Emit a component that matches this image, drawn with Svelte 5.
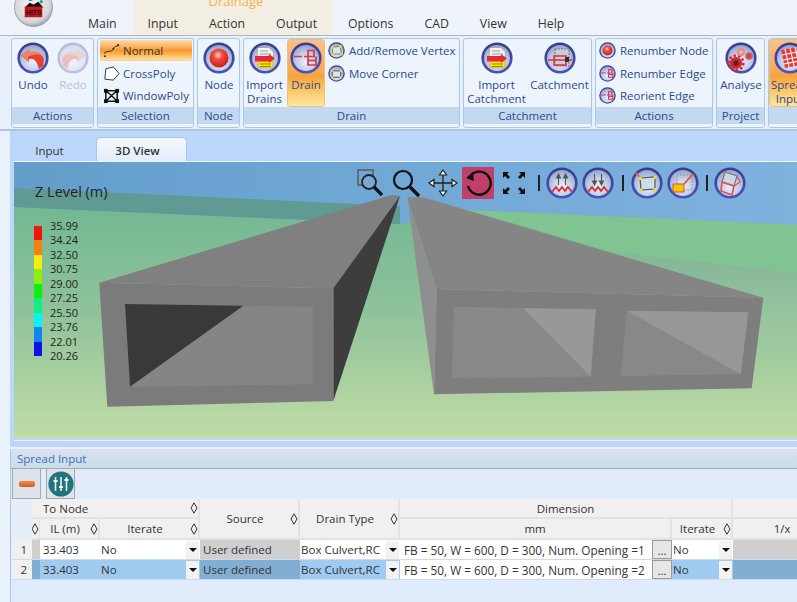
<script>
  const tabs = ['Main', 'Input', 'Action', 'Output', 'Options', 'CAD', 'View', 'Help'];
  const legend = ['35.99', '34.24', '32.50', '30.75', '29.00', '27.25', '25.50', '23.76', '22.01', '20.26'];
  const swatches = ['#f2130f', '#f08212', '#f2ee10', '#8cf010', '#10ee10', '#10ee84', '#10f2f2', '#1084f0', '#1010ee'];
  const rows = [
    { n: 1, dim: 'FB = 50, W = 600, D = 300, Num. Opening =1' },
    { n: 2, dim: 'FB = 50, W = 600, D = 300, Num. Opening =2' }
  ];
</script>

{#snippet ring(name, cls)}
  <svg class={cls} viewBox="0 0 32 32" aria-hidden="true">
    <circle cx="16" cy="16" r="15.6" fill="url(#rimG)" />
    <circle cx="16" cy="16" r="13" fill="url(#discG)" />
    {#if name === 'undo'}
      <path d="M4 13.5 L12 7.5 L13 10 C19 8 25 11 27 17 L26 24 L22 27 L20 21 C18 17 15 16 12 17 L11.5 20 Z" fill="#e8402f" />
      <path d="M4 13.5 L12 7.5 L13 10 C18 8.5 23 10 25.5 14 C21 12 16 12 11 15 L11.5 20 Z" fill="#f0806a" />
    {:else if name === 'node'}
      <circle cx="16" cy="16" r="9.5" fill="url(#ballG)" />
    {:else if name === 'import'}
      <path d="M9 6 H20 L24 10 V26 H9 Z" fill="#f4e415" stroke="#a89a20" stroke-width=".5" />
      <path d="M9 6 H20 L24 10 V14 H9 Z" fill="#f2f2ee" />
      <path d="M11 9 H19 M11 12 H22" stroke="#999" stroke-width="1" />
      <path d="M11 22 H22 M11 24.5 H22" stroke="#8a7c10" stroke-width=".9" />
      <path d="M6 14 H20 V12 L26 16.5 L20 21 V19.5 H6 Z" fill="#e8283a" />
    {:else if name === 'drain'}
      <path d="M4 14.5 H12 M14 14.5 H24 V8.5 H18 V23 H26 V14.5" fill="none" stroke="#e1343c" stroke-width="1.7" />
      <path d="M18 18.5 H26" stroke="#e1343c" stroke-width="1.7" />
    {:else if name === 'vertex'}
      <path d="M8 10 L23 8 L25 22 L9 23 Z" fill="#dbe4f2" stroke="#4a6a2a" stroke-width="1.4" />
      <g fill="#e8dc30"><rect x="6" y="8" width="5" height="5" /><rect x="21" y="6" width="5" height="5" /><rect x="23" y="20" width="5" height="5" /><rect x="7" y="21" width="5" height="5" /></g>
    {:else if name === 'corner'}
      <path d="M8 11 H24 V23 H8 Z" fill="#dbe4f2" stroke="#333" stroke-width="1.6" />
      <path d="M3 5 L9 11" stroke="#e86a5a" stroke-width="1.6" />
      <g fill="#e8dc30"><rect x="6" y="9" width="4" height="4" /><rect x="22" y="9" width="4" height="4" /><rect x="22" y="21" width="4" height="4" /><rect x="6" y="21" width="4" height="4" /></g>
    {:else if name === 'catch'}
      <rect x="11" y="7" width="14" height="17" fill="#c8cfdb" stroke="#777" stroke-width="1" stroke-dasharray="2 1" />
      <rect x="10" y="14" width="12" height="9" fill="none" stroke="#e1343c" stroke-width="1.6" />
      <path d="M4 18 H28" stroke="#e1343c" stroke-width="1.6" />
      <rect x="21" y="15" width="4" height="5" fill="#333" />
    {:else if name === 'edge'}
      <path d="M4 15 H13 M15 15 H24 V9 H18 V23 H26 V15 M18 18 H26" fill="none" stroke="#d63a52" stroke-width="2" />
    {:else if name === 'gears'}
      <circle cx="11" cy="21" r="4.4" fill="#333" stroke="#e1202a" stroke-width="3.4" />
      <circle cx="11" cy="21" r="7.4" fill="none" stroke="#e1202a" stroke-width="2.4" stroke-dasharray="2.4 2.2" />
      <circle cx="16" cy="10" r="3" fill="none" stroke="#e89080" stroke-width="2.6" />
      <circle cx="24" cy="14" r="2.6" fill="#666" stroke="#e25050" stroke-width="2.4" />
    {:else if name === 'sheet'}
      <path d="M7 8 L22 5 L26 23 L11 26 Z" fill="#e83a3a" />
      <path d="M11 7 L15 25 M16 6 L20 24 M21 5 L25 23 M8 13 L23 10 M9 18 L24 15 M10 22 L25 19" stroke="#fff" stroke-width="1.1" />
    {:else if name === 'up' || name === 'down'}
      <path d="M6 25 L10 20 L13 24 L16 20 L19 24 L22 20 L26 25" fill="none" stroke="#e0303a" stroke-width="1.8" />
      {#if name === 'up'}
        <path d="M12.5 18 V8 M19.5 18 V8 M10.5 11 L12.5 7 L14.5 11 Z M17.5 11 L19.5 7 L21.5 11 Z" stroke="#555" stroke-width="1.1" fill="#555" />
      {:else}
        <path d="M12.5 7 V17 M19.5 7 V17 M10.5 14 L12.5 18 L14.5 14 Z M17.5 14 L19.5 18 L21.5 14 Z" stroke="#555" stroke-width="1.1" fill="#555" />
      {/if}
    {:else if name === 'fit'}
      <path d="M9 11 L24 10 L24 22 L10 23 Z" fill="#cfdaec" stroke="#555" stroke-width="1.2" />
      <path d="M4 5 L10 11" stroke="#e86a5a" stroke-width="1.5" />
      <g fill="#e8dc30"><rect x="8" y="10" width="3" height="3" /><rect x="22.5" y="9" width="3" height="3" /><rect x="22.5" y="21" width="3" height="3" /><rect x="8.5" y="21.5" width="3" height="3" /></g>
    {:else if name === 'box'}
      <rect x="10" y="8" width="15" height="15" fill="none" stroke="#999" stroke-dasharray="2 1" />
      <rect x="6" y="17" width="11" height="8" fill="#f6c408" stroke="#d0392a" stroke-width=".8" />
      <path d="M17 17 L26 7" stroke="#e8503a" stroke-width="1.8" />
    {:else if name === 'cube'}
      <path d="M11 5 L23 9 L20 19 L8 15 Z" fill="#cfd6e6" stroke="#777" stroke-width="1.2" />
      <path d="M8 15 L20 19 L18 28 L7 24 Z" fill="none" stroke="#d8505a" stroke-width="1.6" />
      <path d="M20 19 L26 15 L23 9" fill="none" stroke="#d8505a" stroke-width="1.2" />
    {/if}
  </svg>
{/snippet}

{#snippet diamond()}
  <svg class="dia" viewBox="0 0 8 12" aria-hidden="true"><path d="M4 .8 L7 6 L4 11.2 L1 6 Z" fill="none" stroke="#333" stroke-width="1" /></svg>
{/snippet}

{#snippet drop()}
  <span class="drop"><svg viewBox="0 0 8 4" aria-hidden="true"><path d="M0 0 H8 L4 4 Z" fill="#111" /></svg></span>
{/snippet}

<svg class="defs" aria-hidden="true">
  <defs>
    <linearGradient id="rimG" x1="0" y1="0" x2="0" y2="1"><stop offset="0" stop-color="#383d8a" /><stop offset="1" stop-color="#4a52b8" /></linearGradient>
    <radialGradient id="discG" cx=".5" cy=".65" r=".65"><stop offset="0" stop-color="#e8f0fb" /><stop offset=".5" stop-color="#c6d2ec" /><stop offset="1" stop-color="#93a3cf" /></radialGradient>
    <radialGradient id="ballG" cx=".45" cy=".35" r=".7"><stop offset="0" stop-color="#ffd4c8" /><stop offset=".35" stop-color="#f04a3e" /><stop offset="1" stop-color="#c41a18" /></radialGradient>
    <radialGradient id="silverG" cx=".45" cy=".4" r=".65"><stop offset="0" stop-color="#f4f4f4" /><stop offset=".75" stop-color="#d4d6d8" /><stop offset="1" stop-color="#8b8f96" /></radialGradient>
    <linearGradient id="skyG" x1="0" y1="0" x2="1" y2="0"><stop offset="0" stop-color="#639ecb" /><stop offset=".5" stop-color="#71a8d6" /><stop offset="1" stop-color="#80b2de" /></linearGradient>
    <linearGradient id="groundG" gradientUnits="userSpaceOnUse" x1="0" y1="205" x2="0" y2="438"><stop offset="0" stop-color="#72b893" /><stop offset=".45" stop-color="#8fc29a" /><stop offset="1" stop-color="#c0dca6" /></linearGradient>
    <linearGradient id="farG" gradientUnits="userSpaceOnUse" x1="0" y1="262" x2="0" y2="340"><stop offset="0" stop-color="#86b898" /><stop offset="1" stop-color="#9dc99f" /></linearGradient>
  </defs>
</svg>

<div class="app">
  <header class="menu">
    <div class="orb">
      <svg viewBox="0 0 40 40" aria-hidden="true">
        <circle cx="20" cy="20" r="19.5" fill="url(#silverG)" stroke="#8f939a" stroke-width=".8" />
        <path d="M11 20 L16 15 L20 17 L25 14 L30 20 Z" fill="#111" />
        <circle cx="17" cy="11" r="2.4" fill="#1d7fc4" /><circle cx="23" cy="10" r="2.2" fill="#1d7fc4" /><circle cx="28" cy="14" r="1.6" fill="#29a0a0" />
        <rect x="11" y="19" width="18" height="11" fill="#c8141c" />
        <text x="20" y="28" class="orbt">HITS</text>
      </svg>
    </div>
    <div class="ctx"><span>Drainage</span></div>
    <nav class="tabs">
      {#each tabs as t}<span>{t}</span>{/each}
    </nav>
  </header>

  <section class="ribbon">
    <div class="group g-act">
      <div class="body">
        <div class="big">{@render ring('undo', 'lg')}<span>Undo</span></div>
        <div class="big off">{@render ring('undo', 'lg flip')}<span>Redo</span></div>
      </div>
      <div class="title">Actions</div>
    </div>

    <div class="group g-sel">
      <div class="body col">
        <div class="sel on">
          <svg class="si" viewBox="0 0 18 18" aria-hidden="true"><path d="M1 12 C6 8 9 12 11 7 C12 5 14 4 17 4" fill="none" stroke="#222" stroke-width="1" /><circle cx="2" cy="15" r="1" fill="#222" /><circle cx="11" cy="7" r="1" fill="#222" /><circle cx="16" cy="3" r="1" fill="#222" /></svg>
          <span>Normal</span>
        </div>
        <div class="sel">
          <svg class="si" viewBox="0 0 18 18" aria-hidden="true"><path d="M3 4 L11 2 L17 9 L11 16 L2 15 Z" fill="#fff" stroke="#333" stroke-width="1" /></svg>
          <span>CrossPoly</span>
        </div>
        <div class="sel">
          <svg class="si" viewBox="0 0 18 18" aria-hidden="true"><path d="M3 4 L15 4 L15 15 L3 15 Z M3 4 L9 9 L15 4 M3 15 L9 9 L15 15" fill="none" stroke="#111" stroke-width="1.6" /><g fill="#111"><rect x="1" y="2" width="4" height="4" /><rect x="13" y="2" width="4" height="4" /><rect x="1" y="13" width="4" height="4" /><rect x="13" y="13" width="4" height="4" /></g></svg>
          <span>WindowPoly</span>
        </div>
      </div>
      <div class="title">Selection</div>
    </div>

    <div class="group g-node">
      <div class="body"><div class="big wide">{@render ring('node', 'lg')}<span>Node</span></div></div>
      <div class="title">Node</div>
    </div>

    <div class="group g-drain">
      <div class="body">
        <div class="big b-imp">{@render ring('import', 'lg')}<span>Import<br />Drains</span></div>
        <div class="big b-drain on">{@render ring('drain', 'lg')}<span>Drain</span></div>
        <div class="small-col pad-l">
          <div class="sm">{@render ring('vertex', 'smi')}<span>Add/Remove Vertex</span></div>
          <div class="sm">{@render ring('corner', 'smi')}<span>Move Corner</span></div>
        </div>
      </div>
      <div class="title">Drain</div>
    </div>

    <div class="group g-catch">
      <div class="body">
        <div class="big b-c">{@render ring('import', 'lg')}<span>Import<br />Catchment</span></div>
        <div class="big b-c">{@render ring('catch', 'lg')}<span>Catchment</span></div>
      </div>
      <div class="title">Catchment</div>
    </div>

    <div class="group g-act2">
      <div class="body">
        <div class="small-col">
          <div class="sm">{@render ring('node', 'smi')}<span>Renumber Node</span></div>
          <div class="sm">{@render ring('edge', 'smi')}<span>Renumber Edge</span></div>
          <div class="sm">{@render ring('edge', 'smi')}<span>Reorient Edge</span></div>
        </div>
      </div>
      <div class="title">Actions</div>
    </div>

    <div class="group g-proj">
      <div class="body"><div class="big wide">{@render ring('gears', 'lg')}<span>Analyse</span></div></div>
      <div class="title">Project</div>
    </div>

    <div class="group g-spread">
      <div class="body"><div class="big b-spread on">{@render ring('sheet', 'lg')}<span>Spread<br />Input</span></div></div>
      <div class="title">&nbsp;</div>
    </div>
  </section>

  <section class="doc">
    <div class="doctabs">
      <span class="dt">Input</span>
      <span class="dt active">3D View</span>
    </div>
    <div class="canvas">
      <svg class="scene" viewBox="14 162 783 276" preserveAspectRatio="none" aria-hidden="true">
        <rect x="14" y="162" width="783" height="276" fill="url(#skyG)" />
        <path d="M14 207 L400 224 L467 210 L797 225 V438 H14 Z" fill="url(#groundG)" />
        <path d="M467 210 L797 225 V273 L613 252 Z" fill="#80c492" />
        <path d="M14 188 L400 206 V224 L14 207 Z" fill="#5f9a93" />
        <path d="M613 252 L797 273 V340 H763 L680 272 Z" fill="url(#farG)" />

        <path d="M99.3 282.7 L391.7 195 L400 196 L333.3 288.3 Z" fill="#808080" />
        <path d="M333.3 288.3 L400 196 L333.3 401 Z" fill="#3d3d3d" />
        <path d="M99.3 282.7 L333.3 288.3 V401 L107.3 406.7 Z" fill="#7b7b7b" />
        <path d="M125 304 L312.7 306.7 V384.3 L130 386.7 Z" fill="#858585" />
        <path d="M125 304 L243.3 305.7 L130 386.7 Z" fill="#393939" />

        <path d="M407.3 197.3 L436.7 289 L434 394.3 Z" fill="#8f8f8f" />
        <path d="M407.3 197.3 L423.3 197.3 L763.3 297.7 L436.7 289 Z" fill="#858585" />
        <path d="M436.7 289 L763.3 297.7 L751.7 388.3 L434 394.3 Z" fill="#7e7e7e" />
        <path d="M454 306.7 L595.7 309.3 L590.7 376.7 L451.7 378.3 Z" fill="#888888" />
        <path d="M523.3 308.3 L595.7 309.3 L590.7 376.7 Z" fill="#989898" />
        <path d="M626.7 310.7 L748.3 312.3 L740.7 374.3 L620.7 376 Z" fill="#888888" />
        <path d="M626.7 310.7 L748.3 312.3 L740.7 374.3 Z" fill="#979797" />
      </svg>

      <div class="zlabel">Z Level (m)</div>
      <div class="legend">
        <div class="bar">{#each swatches as c}<i style:background={c}></i>{/each}</div>
        <div class="vals">{#each legend as v}<span>{v}</span>{/each}</div>
      </div>

      <div class="tools">
        <svg class="ti" viewBox="0 0 32 32" aria-hidden="true"><rect x="4" y="3" width="15" height="15" fill="none" stroke="#555" stroke-width="1.4" /><circle cx="15" cy="15" r="7" fill="#7aa8d0" stroke="#222" stroke-width="1.8" /><path d="M20 20 L28 28" stroke="#111" stroke-width="3.2" /></svg>
        <svg class="ti" viewBox="0 0 32 32" aria-hidden="true"><circle cx="13" cy="13" r="9" fill="none" stroke="#111" stroke-width="2.2" /><path d="M20 20 L29 29" stroke="#111" stroke-width="3.4" /></svg>
        <svg class="ti" viewBox="0 0 32 32" aria-hidden="true"><path d="M17 5 V27 M5 16 H29" stroke="#222" stroke-width="1.3" /><path d="M17 3 L20.5 8 H13.5 Z M17 29 L20.5 24 H13.5 Z M3 16 L8 12.5 V19.5 Z M31 16 L26 12.5 V19.5 Z" fill="#fff" stroke="#222" stroke-width="1.2" /></svg>
        <div class="rot"><svg viewBox="0 0 32 32" aria-hidden="true"><path d="M9 8 A11.5 11.5 0 1 1 6 19" fill="none" stroke="#111" stroke-width="2.4" /><path d="M4 11 L12 14 L11 5 Z" fill="#111" /></svg></div>
        <svg class="ti" viewBox="0 0 32 32" aria-hidden="true"><path d="M5 5 H11 L9 7 L12 10 L10 12 L7 9 L5 11 Z M27 5 V11 L25 9 L22 12 L20 10 L23 7 L21 5 Z M5 27 V21 L7 23 L10 20 L12 22 L9 25 L11 27 Z M27 27 H21 L23 25 L20 22 L22 20 L25 23 L27 21 Z" fill="#111" /></svg>
        <span class="sep s1"></span>
        {@render ring('up', 'lg')}
        {@render ring('down', 'lg')}
        <span class="sep s2"></span>
        {@render ring('fit', 'lg')}
        {@render ring('box', 'lg')}
        <span class="sep s3"></span>
        {@render ring('cube', 'lg')}
      </div>
    </div>
  </section>

  <section class="panel">
    <div class="phead">Spread Input</div>
    <div class="ptools">
      <div class="pbtn"><span class="minus"></span></div>
      <div class="pbtn">
        <svg viewBox="0 0 26 26" aria-hidden="true"><circle cx="13" cy="13" r="12.6" fill="#1f7480" /><path d="M7.5 6 V20 M13 6 V20 M18.5 6 V20" stroke="#e8f2f4" stroke-width="1.6" /><path d="M5.5 9 H9.5 V11 H5.5 Z M11 15 H15 V17 H11 Z M16.5 8 H20.5 V10 H16.5 Z" fill="#fff" /></svg>
      </div>
    </div>
    <table>
      <colgroup>
        <col class="c20" /><col class="c8" /><col class="c60" /><col class="c100" /><col class="c100" /><col class="c100" /><col class="c272" /><col class="c61" /><col class="c100" />
      </colgroup>
      <thead>
        <tr class="h1">
          <th rowspan="2" class="blank"></th>
          <th colspan="3"><div class="hc left"><span>To Node</span>{@render diamond()}</div></th>
          <th rowspan="2"><div class="hc"><span>Source</span>{@render diamond()}</div></th>
          <th rowspan="2"><div class="hc"><span>Drain Type</span>{@render diamond()}</div></th>
          <th colspan="2">Dimension</th>
          <th></th>
        </tr>
        <tr class="h2">
          <th class="tight">{@render diamond()}</th>
          <th><div class="hc"><span>IL (m)</span>{@render diamond()}</div></th>
          <th><div class="hc"><span>Iterate</span>{@render diamond()}</div></th>
          <th>mm</th>
          <th><div class="hc"><span>Iterate</span>{@render diamond()}</div></th>
          <th>1/x</th>
        </tr>
      </thead>
      <tbody>
        {#each rows as r}
          <tr class:sel2={r.n === 2}>
            <td class="num">{r.n}</td>
            <td class="ro"></td>
            <td class="ed">33.403</td>
            <td class="ed"><div class="dd"><span>No</span>{@render drop()}</div></td>
            <td class="ro">User defined</td>
            <td class="ed"><div class="dd"><span>Box Culvert,RC</span>{@render drop()}</div></td>
            <td class="dim"><div class="dimw"><span class="dimt">{r.dim}</span><span class="more">...</span></div></td>
            <td class="ed"><div class="dd"><span>No</span>{@render drop()}</div></td>
            <td class="ro"></td>
          </tr>
        {/each}
      </tbody>
    </table>
  </section>
</div>

<style>
  :global(body) { margin: 0; background: #e9f1fb; }
  .defs { position: absolute; width: 0; height: 0; }
  .app {
    width: 797px; height: 602px; overflow: hidden;
    display: flex; flex-direction: column;
    background: #e9f1fb;
    font-family: "Open Sans", "Noto Sans", sans-serif;
    font-size: 11.5px; color: #222;
  }
  svg { display: block; flex: none; }

  .menu { height: 35px; flex: none; position: relative; background: #eff4fb; overflow: hidden; }
  .orb { position: absolute; left: 14px; top: -12px; width: 39px; height: 39px; }
  .orbt { font: bold 7px "Liberation Sans", sans-serif; fill: #111; text-anchor: middle; }
  .ctx {
    position: absolute; left: 133px; top: 0; width: 199px; height: 35px; box-sizing: border-box;
    background: #f2eee3; color: #f7b04e; font-size: 13px; line-height: 13px;
    display: flex; justify-content: center; align-items: flex-start; padding-left: 7px;
  }
  .ctx span { margin-top: -5px; }
  .tabs { position: absolute; left: 88px; top: 15px; display: flex; gap: 31px; font-size: 12.3px; color: #333; line-height: 18px; }

  .ribbon {
    height: 96px; flex: none; box-sizing: border-box;
    display: flex; gap: 3px; padding: 2px 0 0 11px;
    background: #e8f1fb; border-top: 1px solid #aeb8c4; border-bottom: 2px solid #aac5e6;
    overflow: hidden;
  }
  .group {
    flex: none; height: 90px; box-sizing: border-box;
    display: flex; flex-direction: column;
    background: #eef4fc; border: 1px solid #a9c8ef; border-radius: 3px;
    padding-bottom: 3px;
  }
  .g-act { width: 83px; } .g-sel { width: 97px; } .g-node { width: 43px; } .g-drain { width: 217px; }
  .g-catch { width: 129px; } .g-act2 { width: 118px; } .g-proj { width: 49px; } .g-spread { width: 90px; }
  .body { flex: 1; display: flex; min-height: 0; padding-left: 1px; }
  .col { flex-direction: column; }
  .title { height: 17px; flex: none; background: #c3d9ef; text-align: center; color: #2c4a8c; font-size: 11.5px; line-height: 17px; }

  .big {
    width: 40px; flex: none; display: flex; flex-direction: column; align-items: center;
    padding-top: 2px; box-sizing: border-box;
    color: #2c4a8c; text-align: center; line-height: 14px; border-radius: 3px; border: 1px solid transparent;
  }
  .big span { margin-top: 4px; white-space: nowrap; }
  .off { opacity: .3; }
  .wide { width: 100%; }
  .b-imp { width: 39px; }
  .b-drain { width: 38px; margin-left: 3px; }
  .b-c { width: 63px; }
  .b-spread { width: 42px; margin-left: -1px; }
  .on {
    background: linear-gradient(#fdd49a 0, #fbb263 30%, #f9962f 50%, #fbbd62 75%, #fde0a0 100%);
    border: 1px solid #e5c27e;
  }
  .big.on { background: linear-gradient(#fdc084 0, #fba957 45%, #f9a33c 55%, #fcd47c 85%, #fde3a3 100%); color: #2c4a8c; }
  .lg { width: 32px; height: 32px; }
  .smi { width: 17px; height: 17px; }
  .flip { transform: scaleX(-1); }

  .sel {
    height: 21px; box-sizing: border-box; display: flex; align-items: center; gap: 3px;
    margin: 1px 1px 0 1px; padding-left: 2px; color: #2c4a8c; border: 1px solid transparent; border-radius: 2px;
  }
  .sel + .sel { margin-top: 1.5px; }
  .si { width: 17px; height: 17px; }
  .sel.on { color: #333; }
  .small-col { display: flex; flex-direction: column; gap: 5.5px; padding: 3px 0 0 2px; }
  .small-col.pad-l { padding-left: 3px; }
  .sm { display: flex; align-items: center; gap: 4px; height: 17px; color: #2c4a8c; white-space: nowrap; }

  .doc { height: 316px; flex: none; margin-left: 10px; background: #bcd7f9; display: flex; flex-direction: column; }
  .doctabs { height: 30px; flex: none; display: flex; align-items: flex-end; padding-left: 5px; }
  .dt { width: 81px; height: 24px; box-sizing: border-box; text-align: center; line-height: 28px; color: #333; font-size: 11.5px; padding-right: 12px; }
  .active {
    width: 91px; font-weight: 600; color: #333; background: linear-gradient(#f4f8fd, #e2edfa);
    border: 1px solid #a9c8ef; border-bottom: 0; border-radius: 5px 5px 0 0; line-height: 26px; padding-right: 8px;
  }
  .canvas {
    height: 278px; flex: none; position: relative; margin-left: 4px; border-top: 1px solid #f2f6fb; border-bottom: 1px solid #f2f6fb; overflow: hidden;
  }
  .scene { width: 783px; height: 276px; }
  .zlabel { position: absolute; left: 21px; top: 21px; font-size: 14.5px; color: #222; line-height: 18px; }
  .legend { position: absolute; left: 20px; top: 57px; display: flex; gap: 8px; }
  .bar { width: 8px; display: flex; flex-direction: column; margin-top: 7px; }
  .bar i { display: block; height: 14.45px; }
  .vals { display: flex; flex-direction: column; font-size: 11px; line-height: 14.45px; color: #222; }

  .tools { position: absolute; left: 340px; top: 5px; display: flex; align-items: center; gap: 4px; }
  .ti { width: 32px; height: 32px; }
  .rot { width: 32px; height: 32px; background: #c1406a; }
  .rot svg { width: 32px; height: 32px; }
  .sep { width: 2px; height: 16px; background: #222; }
  .s1 { margin: 0 2px 0 4px; }
  .s2 { margin: 0 3px 0 4px; }
  .s3 { margin: 0 2px 0 3px; }

  .panel { flex: 1; min-height: 0; margin-left: 10px; margin-top: 2px; background: #e0ecfc; border-left: 1px solid #a9c8ef; overflow: hidden; }
  .phead { height: 20px; box-sizing: border-box; background: linear-gradient(#dcdff0, #c8dfe8); border-bottom: 1px solid #a8a8a8; color: #3b6fb8; font-size: 11.5px; line-height: 20px; padding-left: 6px; }
  .ptools { height: 30px; display: flex; gap: 5px; padding-left: 1px; }
  .pbtn { width: 29px; height: 30px; box-sizing: border-box; background: #dde3ea; border: 1px solid #a8a8a8; border-top: 0; display: flex; align-items: center; justify-content: center; }
  .pbtn svg { width: 26px; height: 26px; }
  .minus { width: 16px; height: 6px; background: linear-gradient(#f28a4a, #d85a20); border-radius: 2px; }

  table { border-collapse: separate; border-spacing: 0; table-layout: fixed; width: 821px; margin-left: 1px; font-size: 11.5px; color: #333; }
  .c20 { width: 20px; } .c8 { width: 8px; } .c60 { width: 60px; } .c100 { width: 100px; } .c272 { width: 272px; } .c61 { width: 61px; }
  th { background: #f0f0f0; font-weight: 400; border-right: 2px solid #e2e2e2; border-bottom: 2px solid #e2e2e2; padding: 0; text-align: center; overflow: hidden; }
  .h1 th { height: 18px; } .h2 th { height: 19px; }
  .blank { background: #e6eef9; border-color: transparent; }
  .tight { border-right-width: 1px; }
  .tight .dia { margin: 0 0 0 -1px; }
  .hc { display: flex; align-items: center; }
  .hc span { flex: 1; text-align: center; }
  .left span { text-align: left; padding-left: 11px; }
  .dia { width: 8px; height: 12px; }
  td { height: 19px; padding: 0; border-bottom: 1px solid #cfdbe8; white-space: nowrap; overflow: hidden; }
  .num { background: #f0f0f0; text-align: right; padding-right: 5px; box-sizing: border-box; }
  .ro { background: #cfcfcf; padding-left: 3px; }
  .ed { background: #fff; padding-left: 3px; }
  .sel2 .ro { background: #82aed4; }
  .sel2 .ed { background: #9fcbf1; }
  .sel2 .dim { background: #fff; }
  .dd { display: flex; align-items: center; justify-content: space-between; height: 19px; margin-left: -2px; }
  .drop { width: 13px; height: 18px; background: #f2f2f2; display: flex; align-items: center; justify-content: center; flex: none; margin-right: 1px; }
  .drop svg { width: 8px; height: 4px; }
  .dim { background: #fff; padding-left: 2px; }
  .dimw { display: flex; align-items: center; height: 19px; justify-content: space-between; }
  .dimt { padding-left: 2px; font-size: 11.8px; }
  .more { width: 20px; height: 19px; box-sizing: border-box; background: #e6e6e6; border: 1px solid #9a9a9a; text-align: center; line-height: 20px; flex: none; }
</style>
